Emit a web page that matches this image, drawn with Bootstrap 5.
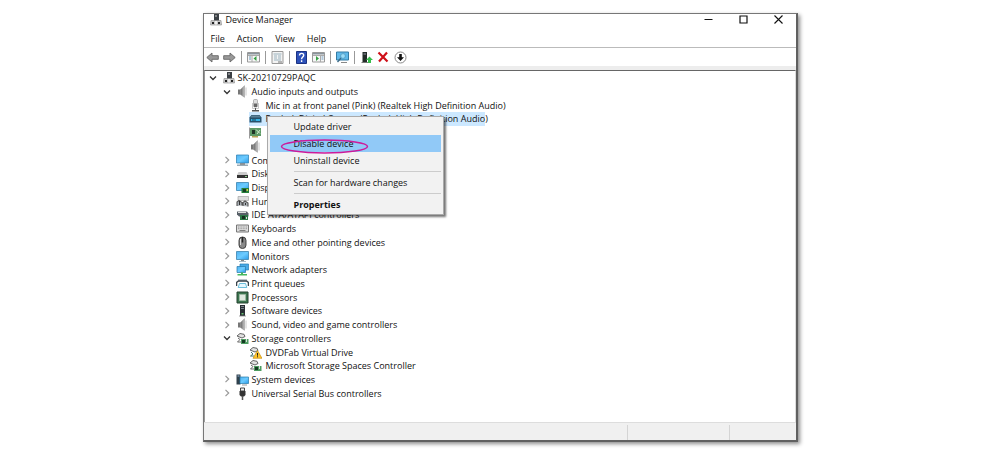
<!DOCTYPE html>
<html lang="en">
<head>
<meta charset="utf-8">
<meta name="viewport" content="width=device-width, initial-scale=1">
<title>Device Manager</title>
<link href="https://cdn.jsdelivr.net/npm/bootstrap@5.3.0/dist/css/bootstrap.min.css" rel="stylesheet">
<style>
  body { font-family: "Open Sans", "Noto Sans", sans-serif; font-size: 9px; line-height: 13px; color: #111; background: #fff; }
  button { padding: 0; border: 0; background: none; color: inherit; font: inherit; }
  svg { display: block; flex: none; }
  .dm-page { padding: 13px 8px 7px; }
  .dm-window { max-width: 595px; min-height: calc(100vh - 21px); border: 1px solid #777; border-right: 2px solid #606060; border-bottom: 2px solid #606060; box-shadow: 2px 2px 4px rgba(0,0,0,.45); }
  .dm-title { height: 11px; padding: 0 8px 0 5px; }
  .dm-title h1 { font-size: 9px; line-height: 13px; font-weight: 400; }
  .dm-menubar { height: 16px; gap: 12px; padding: 0 7px; margin-top: 7px; border-bottom: 1px solid #bbb; }
  .dm-tools { height: 18px; padding: 0; }
  .dm-tools button { width: 17px; height: 17px; display: flex; align-items: center; justify-content: center; }
  .dm-rule { width: 1px; height: 13px; margin: 0 3px; background: #999; }
  .dm-band { height: 4px; background: #ededed; }
  .dm-tree { border-top: 1px solid #666; border-right: 1px solid #ddd; border-left: 1px solid #999; }
  .dm-rows { display: grid; grid-template-rows: repeat(24, 1fr); height: 329px; margin: 0; padding: 0 0 0 4px; list-style: none; }
  .dm-rows li { display: flex; align-items: center; white-space: nowrap; }
  .dm-rows li > button { width: 8px; margin-right: 5px; flex: none; }
  .dm-rows li > svg { width: 13px; height: 13px; margin-right: 3px; }
  .lv1 { padding-left: 14px; }
  .dm-rows .lv2 { padding-left: 40px; }
  .dm-rows .lv2 > svg { margin-right: 4px; }
  .dm-pick { position: relative; }
  .dm-pick::before { content: ""; position: absolute; z-index: 0; left: 40px; width: 236px; top: 0; bottom: 0; background: #cce8ff; }
  .dm-pick > svg, .dm-pick > span { position: relative; }
  .dm-pop { position: absolute; z-index: 5; left: 58px; top: 4px; width: 177px; padding: 1px 2px; background: #f2f2f2; border: 1px solid #aaa; box-shadow: 2px 2px 2px rgba(0,0,0,.55); }
  .dm-pop button { display: block; width: 100%; height: 17px; padding-left: 24px; text-align: left; line-height: 13px; }
  .dm-pop hr { margin: 2px 0 2px 24px; border-top: 1px solid #ccc; opacity: 1; }
  .dm-pop .dm-hot { background: #91c9f7; }
  .dm-ring { position: absolute; left: 12px; top: 21px; pointer-events: none; }
  .dm-status { height: 18px; background: #f0f0f0; border-top: 1px solid #ddd; }
  .dm-status span { border-left: 1px solid #d4d4d4; margin-top: 2px; }
  .dm-cell-a { width: 102px; }
  .dm-cell-b { width: 67px; }
</style>
</head>
<body>
<svg width="0" height="0" class="position-absolute" aria-hidden="true">
  <defs>
    <linearGradient id="sky" x2="1" y2="1"><stop stop-color="#4fb2f2"/><stop offset=".5" stop-color="#6ccbff"/><stop offset="1" stop-color="#2a9ae8"/></linearGradient>
    <linearGradient id="metal"><stop stop-color="#666"/><stop offset="1" stop-color="#c4c4c4"/></linearGradient>
    <symbol id="open" viewBox="0 0 8 8"><path d="M1 2.500l3 3 3-3" fill="none" stroke="#333" stroke-width="1.300"/></symbol>
    <symbol id="shut" viewBox="0 0 8 8"><path d="M2.500 .8l3.200 3.200-3.200 3.200" fill="none" stroke="#999" stroke-width="1.200"/></symbol>
    <symbol id="pc" viewBox="0 0 13 13"><path d="M5 1h5v7H5z" fill="#3a3f44"/><path d="M6.500 2h1v2h-1z" fill="#ccc"/><path d="M2 7.500h10l.5 4.500h-11z" fill="#c9c9c9" stroke="#888" stroke-width=".6"/><path d="M3 9h2v2H3zM9 9h2v2H9z" fill="#222"/><path d="M6 8h2v3.500H6z" fill="#eee"/></symbol>
    <symbol id="speaker" viewBox="0 0 13 13"><path d="M2 4.500h2.500v5H2z" fill="#777"/><path d="M4.500 4.500L8.500.7v11.600L4.500 9.500z" fill="url(#metal)" stroke="#888" stroke-width=".5"/><path d="M10 2.500v8" fill="none" stroke="#bbb" stroke-width=".8"/></symbol>
    <symbol id="mic" viewBox="0 0 13 13"><rect x="4.500" y=".5" width="4" height="7.500" rx="1" fill="#ddd" stroke="#999" stroke-width=".7"/><path d="M5 4.500h3V8H5z" fill="#666"/><path d="M3.500 4v5.500h6V4" fill="none" stroke="#bbb" stroke-width=".8"/><path d="M6 9h1v2H6zM3 11h7v1.500H3z" fill="#555"/></symbol>
    <symbol id="box" viewBox="0 0 13 13"><path d="M2.500 3h8L12.500 5.500v5H.5v-5z" fill="#28506a"/><path d="M2.500 3.500h8l1 2h-10z" fill="#5b8197"/><path d="M2 7h9v2H2z" fill="#35b3e6"/><path d="M3 7.500h4v1H3z" fill="#173a50"/></symbol>
    <symbol id="board" viewBox="0 0 13 13"><path d="M1 2h11v8H1z" fill="#5d9a66"/><path d="M.5 1.500v11" stroke="#999"/><path d="M3 4h3v4H3z" fill="#1f3526"/><path d="M7 3.500l4 4M8 8l3-4" stroke="#d5ecd2"/><path d="M3 10h6v1.500H3z" fill="#b6a356"/></symbol>
    <symbol id="screen" viewBox="0 0 13 13"><path d="M.5 1.500h12v8H.5z" fill="url(#sky)" stroke="#3b83ae" stroke-width=".8"/><path d="M5 10h3v1H5z" fill="#888"/><path d="M3 11h7v1H3z" fill="#a8bbc7"/></symbol>
    <symbol id="computer" viewBox="0 0 13 13"><path d="M.5 1h12v8H.5z" fill="url(#sky)" stroke="#3686b8" stroke-width=".8"/><path d="M1 10.500h11v1.500H1z" fill="#9aabb5"/><path d="M4 9.500h5v1H4z" fill="#555"/></symbol>
    <symbol id="disk" viewBox="0 0 13 13"><path d="M2.500 5h8l1.500 3H1z" fill="#ccc"/><path d="M1 8h11v3H1z" fill="#333"/><path d="M9 9h2v1H9z" fill="#8c8"/></symbol>
    <symbol id="display" viewBox="0 0 13 13"><path d="M.5 1.500h12v8H.5z" fill="url(#sky)" stroke="#3b83ae" stroke-width=".8"/><path d="M5.500 7H13v5H5.500z" fill="#26803a"/><path d="M7 8h3v3H7z" fill="#163d24"/><path d="M10.500 8h1.500v2h-1.500z" fill="#d4c94a"/></symbol>
    <symbol id="hid" viewBox="0 0 13 13"><path d="M2 1.500h10.500v4H2z" fill="#ddd" stroke="#999" stroke-width=".6"/><path d="M1 11V7l2-1.500L6 7.500v3M7 11V7.500l2-1.500 3 2v3.500" fill="#aab0b5" stroke="#555" stroke-width="1.100"/><path d="M3.500 6v4M9.500 8v2" stroke="#333"/></symbol>
    <symbol id="ide" viewBox="0 0 13 13"><path d="M1 3.500h10l1.500 2v3H3l-2-2z" fill="#586068"/><path d="M2 4.500h8" stroke="#ddd"/><path d="M4 7h8v5H4z" fill="#2b7845"/><path d="M6 8h3v3H6z" fill="#142f1e"/><path d="M10 9h1v2h-1z" fill="#ddd"/></symbol>
    <symbol id="keys" viewBox="0 0 13 13"><path d="M.5 3h12v7H.5z" fill="#dedede" stroke="#777"/><path d="M2 5h9M2 6.700h9" stroke="#888" stroke-width=".8" stroke-dasharray="1 .6"/><path d="M3.500 8.500h6" stroke="#666" stroke-width=".8"/></symbol>
    <symbol id="mouse" viewBox="0 0 13 13"><rect x="3" y="1" width="7" height="11.500" rx="3.400" fill="#888" stroke="#333" stroke-width=".9"/><path d="M6.500 1v5.500" stroke="#222" stroke-width="1.500"/><path d="M4.500 3v6" stroke="#ddd"/></symbol>
    <symbol id="net" viewBox="0 0 13 13"><path d="M4 1h8.500v6H4z" fill="#48aae6" stroke="#237bb3" stroke-width=".7"/><path d="M1 3.500h8.500v6H1z" fill="url(#sky)" stroke="#2777a8" stroke-width=".7"/><path d="M5 9.500h2v1.500h4v1.500H1.500V11H5z" fill="#46b85e"/></symbol>
    <symbol id="printer" viewBox="0 0 13 13"><path d="M2 2h9v2H2z" fill="#bcc6cc"/><path d="M.5 9V5.500L2.500 4h8l2 1.500V9" fill="none" stroke="#39434a" stroke-width="1.500"/><path d="M3.500 6.500h6l1.300 4H2.200z" fill="#e6f8ff" stroke="#4bafd1" stroke-width=".8"/></symbol>
    <symbol id="cpu" viewBox="0 0 13 13"><path d="M1 1h11v11H1z" fill="#3c7650" stroke="#24432f"/><path d="M3.500 3.500h6v6h-6z" fill="#dfe9df" stroke="#9fb9a4"/></symbol>
    <symbol id="tower" viewBox="0 0 13 13"><path d="M4 1h5v11H4z" fill="#292e33"/><path d="M5 2.500h3M5 4.500h3" stroke="#8f9ba3" stroke-width=".8"/><path d="M5.500 9h2v1.500h-2z" fill="#6bc174"/><path d="M3 12h7" stroke="#888" stroke-width=".8"/></symbol>
    <symbol id="store" viewBox="0 0 13 13"><path d="M1 4l3-2.500 4 .8 1 2.200-3 1.500z" fill="#e2e2e2" stroke="#555" stroke-width=".9"/><path d="M2 6l2 1.500L1.500 10h4" fill="none" stroke="#666"/><path d="M5 7h7.500v5H5z" fill="#4d9c60"/><path d="M6 8h3v3H6z" fill="#153a22"/><path d="M10.500 7v3" stroke="#ddd"/></symbol>
    <symbol id="warn" viewBox="0 0 13 13"><path d="M1 4l3-2.500 4 .8 1 2.200-3 1.500z" fill="#e2e2e2" stroke="#555" stroke-width=".9"/><path d="M2 6l2 2-2.500 2H5" fill="none" stroke="#477"/><path d="M8.500 4.500L13 12.300H4z" fill="#ffc52b" stroke="#bd8100" stroke-width=".6"/><path d="M8.500 7v2.700M8.500 10.300v1" stroke="#222"/></symbol>
    <symbol id="system" viewBox="0 0 13 13"><path d="M.5 1.500h4v10h-4z" fill="#30414c"/><path d="M1.500 3h2" stroke="#9bd"/><path d="M4 4h8.500v6.500H4z" fill="url(#sky)" stroke="#277bab" stroke-width=".7"/><path d="M6 12h5" stroke="#999"/></symbol>
    <symbol id="usb" viewBox="0 0 13 13"><path d="M4.500 1h4v3h-4z" fill="#eee" stroke="#444"/><path d="M3.500 4h6v4L8 9.500H5L3.500 8z" fill="#333"/><path d="M6.500 9v4" stroke="#555" stroke-width="1.500"/></symbol>
  </defs>
</svg>

<div class="container-fluid dm-page">
<main class="dm-window mx-auto d-flex flex-column bg-white">
  <header class="dm-title d-flex align-items-center flex-shrink-0">
    <svg width="13" height="13" class="me-1"><use href="#pc"/></svg>
    <h1 class="m-0 me-auto">Device Manager</h1>
    <div class="d-flex gap-4 pe-1">
      <button aria-label="Minimize"><svg width="11" height="11" viewBox="0 0 11 11"><path d="M1.500 5.500h8" stroke="#111"/></svg></button>
      <button aria-label="Maximize"><svg width="11" height="11" viewBox="0 0 11 11"><path d="M2 2h7v7H2z" fill="none" stroke="#111" stroke-width="1.200"/></svg></button>
      <button aria-label="Close"><svg width="11" height="11" viewBox="0 0 11 11"><path d="M1.500 1.500l8 8M9.500 1.500l-8 8" stroke="#111" stroke-width="1.100"/></svg></button>
    </div>
  </header>
  <nav class="dm-menubar d-flex align-items-start flex-shrink-0" aria-label="Menu">
    <button>File</button><button>Action</button><button>View</button><button>Help</button>
  </nav>
  <div class="dm-tools d-flex align-items-center flex-shrink-0" role="toolbar">
    <button aria-label="Back"><svg width="13" height="11" viewBox="0 0 13 11"><path d="M.8 5.500L6 1v2.700h6.300v3.600H6V10z" fill="#999" stroke="#666" stroke-width=".9"/></svg></button>
    <button aria-label="Forward"><svg width="13" height="11" viewBox="0 0 13 11"><path d="M12.200 5.500L7 1v2.700H.7v3.600H7V10z" fill="#999" stroke="#666" stroke-width=".9"/></svg></button>
    <i class="dm-rule"></i>
    <button aria-label="Show console tree"><svg width="13" height="12" viewBox="0 0 13 12"><path d="M.5 1.500h12v9.500H.5z" fill="#f7f7f7" stroke="#999"/><path d="M1 2h11v1.500H1z" fill="#8a949c"/><path d="M5 4v7M1 4.500h11" stroke="#aaa"/><path d="M2 6h2M2 8h2" stroke="#6b99bd"/><path d="M9.500 5v5L6.500 7.500z" fill="#35a043"/></svg></button>
    <i class="dm-rule"></i>
    <button aria-label="Properties"><svg width="13" height="13" viewBox="0 0 13 13"><path d="M1 .5h11v12H1z" fill="#f3f3f3" stroke="#999"/><path d="M2.500 3h8M3 5h3M7 5h3M3 7h3M7 7h3M3 9h7" stroke="#9bb3bf"/><path d="M7 11h4" stroke="#777"/></svg></button>
    <i class="dm-rule"></i>
    <button aria-label="Help"><svg width="11" height="13" viewBox="0 0 11 13"><path d="M.5.5h10v12H.5z" fill="#2c50b8" stroke="#1b3282"/><path d="M3.500 4.500c0-3 4.200-2.600 4.200-.3C7.700 6 5.600 6 5.600 8.200M5.600 9.300v1.600" fill="none" stroke="#fff" stroke-width="1.400"/></svg></button>
    <button aria-label="Action pane"><svg width="13" height="12" viewBox="0 0 13 12"><path d="M.5 1.500h12v9.500H.5z" fill="#f7f7f7" stroke="#999"/><path d="M1 2h11v1.500H1z" fill="#8a949c"/><path d="M8.500 4v7M1 4.500h11" stroke="#aaa"/><path d="M9.500 6h2M9.500 8h2" stroke="#6b99bd"/><path d="M4 5v5l3-2.500z" fill="#35a043"/></svg></button>
    <i class="dm-rule"></i>
    <button aria-label="Scan for hardware changes"><svg width="13" height="13" viewBox="0 0 13 13"><path d="M.5 1h12v8H.5z" fill="#5fb9ea" stroke="#357ba3"/><circle cx="7" cy="5" r="2.400" fill="#9bdcf8" stroke="#4b90b5" stroke-width=".7"/><path d="M5 7l-3.500 4" stroke="#3c6a88" stroke-width="1.400"/><path d="M5 11.500h6" stroke="#888"/></svg></button>
    <i class="dm-rule"></i>
    <button aria-label="Update driver"><svg width="13" height="13" viewBox="0 0 13 13"><path d="M2.500 1h4.500v10H2.500z" fill="#222c28"/><path d="M3.500 3h2.500" stroke="#99a"/><path d="M1.500 11.500H8" stroke="#777"/><path d="M9.500 5.500L13 9h-2v3H8V9H6z" fill="#37bd4b"/></svg></button>
    <button aria-label="Uninstall device"><svg width="12" height="12" viewBox="0 0 12 12"><path d="M1.500 1.500l9 9M10 1.500l-8 9" stroke="#cf1019" stroke-width="2.200"/></svg></button>
    <button aria-label="Disable device"><svg width="13" height="13" viewBox="0 0 13 13"><circle cx="6.500" cy="6.500" r="5.500" fill="#fff" stroke="#888"/><path d="M5.200 3h2.600v3.200H10L6.500 10 3 6.200h2.200z" fill="#111"/></svg></button>
  </div>
  <div class="dm-band flex-shrink-0"></div>
  <section class="dm-tree flex-grow-1">
    <ul class="dm-rows">
      <li><button aria-label="Collapse"><svg width="8" height="8"><use href="#open"/></svg></button><svg><use href="#pc"/></svg><span>SK-20210729PAQC</span></li>
      <li class="lv1"><button aria-label="Collapse"><svg width="8" height="8"><use href="#open"/></svg></button><svg><use href="#speaker"/></svg><span>Audio inputs and outputs</span></li>
      <li class="lv2"><svg><use href="#mic"/></svg><span>Mic in at front panel (Pink) (Realtek High Definition Audio)</span></li>
      <li class="lv2 dm-pick"><svg><use href="#box"/></svg><span>Realtek Digital Output (Realtek High Definition Audio)</span>
        <div class="dm-pop">
          <button>Update driver</button>
          <button class="dm-hot">Disable device</button>
          <button>Uninstall device</button>
          <hr>
          <button>Scan for hardware changes</button>
          <hr>
          <button class="fw-bold">Properties</button>
          <svg class="dm-ring" width="89" height="17" viewBox="0 0 89 17"><ellipse cx="44.500" cy="8.500" rx="43" ry="6.500" fill="none" stroke="#cc1b9b" stroke-width="1.500"/></svg>
        </div>
      </li>
      <li class="lv2"><svg><use href="#board"/></svg></li>
      <li class="lv2"><svg><use href="#speaker"/></svg></li>
      <li class="lv1"><button aria-label="Expand"><svg width="8" height="8"><use href="#shut"/></svg></button><svg><use href="#computer"/></svg><span>Computer</span></li>
      <li class="lv1"><button aria-label="Expand"><svg width="8" height="8"><use href="#shut"/></svg></button><svg><use href="#disk"/></svg><span>Disk drives</span></li>
      <li class="lv1"><button aria-label="Expand"><svg width="8" height="8"><use href="#shut"/></svg></button><svg><use href="#display"/></svg><span>Display adapters</span></li>
      <li class="lv1"><button aria-label="Expand"><svg width="8" height="8"><use href="#shut"/></svg></button><svg><use href="#hid"/></svg><span>Human Interface Devices</span></li>
      <li class="lv1"><button aria-label="Expand"><svg width="8" height="8"><use href="#shut"/></svg></button><svg><use href="#ide"/></svg><span>IDE ATA/ATAPI controllers</span></li>
      <li class="lv1"><button aria-label="Expand"><svg width="8" height="8"><use href="#shut"/></svg></button><svg><use href="#keys"/></svg><span>Keyboards</span></li>
      <li class="lv1"><button aria-label="Expand"><svg width="8" height="8"><use href="#shut"/></svg></button><svg><use href="#mouse"/></svg><span>Mice and other pointing devices</span></li>
      <li class="lv1"><button aria-label="Expand"><svg width="8" height="8"><use href="#shut"/></svg></button><svg><use href="#screen"/></svg><span>Monitors</span></li>
      <li class="lv1"><button aria-label="Expand"><svg width="8" height="8"><use href="#shut"/></svg></button><svg><use href="#net"/></svg><span>Network adapters</span></li>
      <li class="lv1"><button aria-label="Expand"><svg width="8" height="8"><use href="#shut"/></svg></button><svg><use href="#printer"/></svg><span>Print queues</span></li>
      <li class="lv1"><button aria-label="Expand"><svg width="8" height="8"><use href="#shut"/></svg></button><svg><use href="#cpu"/></svg><span>Processors</span></li>
      <li class="lv1"><button aria-label="Expand"><svg width="8" height="8"><use href="#shut"/></svg></button><svg><use href="#tower"/></svg><span>Software devices</span></li>
      <li class="lv1"><button aria-label="Expand"><svg width="8" height="8"><use href="#shut"/></svg></button><svg><use href="#speaker"/></svg><span>Sound, video and game controllers</span></li>
      <li class="lv1"><button aria-label="Collapse"><svg width="8" height="8"><use href="#open"/></svg></button><svg><use href="#store"/></svg><span>Storage controllers</span></li>
      <li class="lv2"><svg><use href="#warn"/></svg><span>DVDFab Virtual Drive</span></li>
      <li class="lv2"><svg><use href="#store"/></svg><span>Microsoft Storage Spaces Controller</span></li>
      <li class="lv1"><button aria-label="Expand"><svg width="8" height="8"><use href="#shut"/></svg></button><svg><use href="#system"/></svg><span>System devices</span></li>
      <li class="lv1"><button aria-label="Expand"><svg width="8" height="8"><use href="#shut"/></svg></button><svg><use href="#usb"/></svg><span>Universal Serial Bus controllers</span></li>
    </ul>
  </section>
  <footer class="dm-status d-flex justify-content-end flex-shrink-0"><span class="dm-cell-a"></span><span class="dm-cell-b"></span></footer>
</main>
</div>
<script src="https://cdn.jsdelivr.net/npm/bootstrap@5.3.0/dist/js/bootstrap.bundle.min.js"></script>
</body>
</html>
